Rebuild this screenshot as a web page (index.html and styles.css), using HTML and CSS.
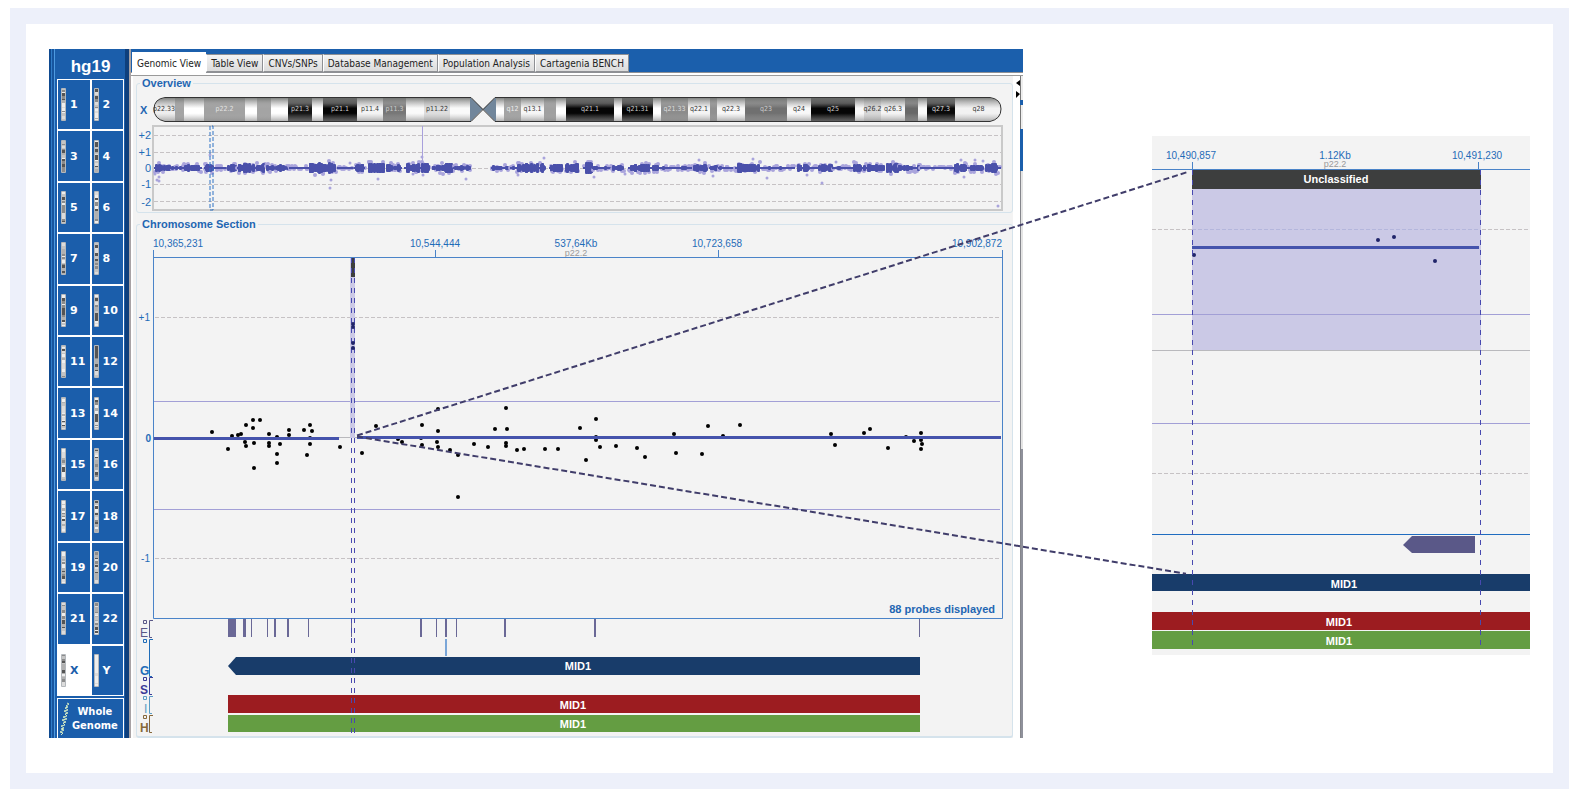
FILE: index.html
```
<!DOCTYPE html>
<html lang="en">
<head>
  <meta charset="UTF-8" />
  <meta name="viewport" content="width=device-width, initial-scale=1.0" />
  <title>Genomic View - chromosome X</title>
  <link rel="stylesheet" href="styles.css">
</head>
<body>
  <div class="figure">
    <div class="app">
      <aside class="sidebar">
        <h1>hg19</h1>
        <div class="chrom-grid" id="chromGrid"></div>
        <button type="button" class="whole-genome">
          <svg width="10" height="34" viewBox="0 0 10 34">
            <path d="M7 1l2 1-3 2 2 1-3 1 3 2-4 1 4 2-3 1 2 2-4 1 4 2-5 1 4 2-3 1 2 2-4 1 3 2-3 1 3 1-4 2 3 1-2 2" />
          </svg>
          <span>Whole<br>Genome</span>
        </button>
      </aside>

      <nav class="tabs">
        <button type="button" class="tab active">Genomic View</button>
        <button type="button" class="tab">Table View</button>
        <button type="button" class="tab">CNVs/SNPs</button>
        <button type="button" class="tab">Database Management</button>
        <button type="button" class="tab">Population Analysis</button>
        <button type="button" class="tab">Cartagenia BENCH</button>
      </nav>

      <main class="content">
        <fieldset>
          <legend>Overview</legend>
          <svg class="chart" viewBox="137 89 875 123">
            <defs>
              <linearGradient id="tube" x1="0" y1="0" x2="0" y2="1">
                <stop offset="0" stop-color="#6a6d6a" stop-opacity="0.95" />
                <stop offset="0.25" stop-color="#a0a0a0" stop-opacity="0.55" />
                <stop offset="0.45" stop-color="#b0b0b0" stop-opacity="0" />
                <stop offset="0.65" stop-color="#b0b0b0" stop-opacity="0" />
                <stop offset="1" stop-color="#888888" stop-opacity="0.75" />
              </linearGradient>
              <clipPath id="arms">
                <path d="M165 98H471L483 109L471 121H165Q154 119 154 109T165 98ZM495 98H990Q1001 99 1001 109T990 121H495L483 109Z" />
              </clipPath>
            </defs>
            <text class="label-bold" x="140" y="114">X</text>
            <g clip-path="url(#arms)">
              <g id="bands"></g>
              <rect x="153" y="97" width="850" height="25" fill="url(#tube)" />
              <path class="centromere" d="M470 97L483 109L470 122ZM496 97L483 109L496 122Z" />
            </g>
            <path class="outline" d="M165 97.500H471L495 121.500H990Q1001 119 1001 109T990 97.500H495L471 121.500H165Q154 119 154 109T165 97.500Z" />
            <g id="bandLabels"></g>

            <rect class="overview-box" x="153" y="126" width="849" height="84" />
            <path class="dashed" d="M154 135.500H1001M154 152.500H1001M154 168.500H1001M154 184.500H1001M154 201.500H1001" />
            <g class="axis">
              <text x="151" y="139" text-anchor="end">+2</text>
              <text x="151" y="156" text-anchor="end">+1</text>
              <text x="151" y="172" text-anchor="end">0</text>
              <text x="151" y="188" text-anchor="end">-1</text>
              <text x="151" y="206" text-anchor="end">-2</text>
            </g>
            <path class="spike" d="M422.500 126V166" />
            <g id="overviewPoints"></g>
            <path class="selection" d="M210 126V210H213V126Z" />
          </svg>
        </fieldset>

        <fieldset>
          <legend>Chromosome Section</legend>
          <svg class="chart" viewBox="137 230 875 506">
            <g class="ruler">
              <text x="153" y="247">10,365,231</text>
              <text x="435" y="247" text-anchor="middle">10,544,444</text>
              <text x="576" y="247" text-anchor="middle">537,64Kb</text>
              <text x="717" y="247" text-anchor="middle">10,723,658</text>
              <text x="1002" y="247" text-anchor="end">10,902,872</text>
            </g>
            <text class="band-name" x="576" y="256" text-anchor="middle">p22.2</text>
            <path class="frame" d="M153.500 250V618.500H1002.500V250M153.500 257.500H1002.500M435.500 250V257M718.500 250V257" />
            <path class="dashed" d="M155 317.500H1001M155 558.500H1001" />
            <path class="limit" d="M154 401.500H1000M154 509.500H1000" />
            <path class="base" d="M154 437.500H1001" />
            <rect class="call" x="350" y="258" width="5" height="180" />
            <g class="axis small">
              <text x="150" y="321" text-anchor="end">+1</text>
              <text class="zero" x="151" y="442" text-anchor="end">0</text>
              <text x="150" y="562" text-anchor="end">-1</text>
            </g>
            <g id="sectionPoints"></g>
            <path class="segment" d="M154 438.500H339M357 437.500H1001" />
            <rect class="call-head" x="351" y="258" width="4" height="19" />
            <text class="label-bold" x="995" y="613" text-anchor="end">88 probes displayed</text>

            <g id="exons"></g>
            <rect class="light-exon" x="445" y="639" width="2" height="17" />
            <path class="gene-navy" d="M236 657H920V675H236L228 666Z" />
            <rect class="gene-red" x="228" y="695" width="692" height="18" />
            <rect class="gene-green" x="228" y="715" width="692" height="17" />
            <text class="gene" x="578" y="670">MID1</text>
            <text class="gene" x="573" y="709">MID1</text>
            <text class="gene" x="573" y="728">MID1</text>
            <path class="marker" d="M351.500 258V733M354.500 258V733" />
            <g id="callPoints"></g>

            <g class="track track-e">
              <path d="M153 620.500H149.500V637.500H152M143.500 620.500h3v3h-3z" />
              <text x="140" y="637">E</text>
            </g>
            <g class="track track-g">
              <path d="M153 639.500H149.500V676.500H152M143.500 639.500h3v3h-3z" />
              <text x="140" y="675">G</text>
            </g>
            <g class="track track-s">
              <path d="M153 677.500H149.500V694.500H152M143.500 677.500h3v3h-3z" />
              <text x="140" y="694">S</text>
            </g>
            <g class="track track-i">
              <path d="M153 696.500H149.500V713.500H152M143.500 696.500h3v3h-3z" />
              <text x="144" y="713">I</text>
            </g>
            <g class="track track-h">
              <path d="M153 715.500H149.500V732.500H152M143.500 715.500h3v3h-3z" />
              <text x="140" y="732">H</text>
            </g>
          </svg>
        </fieldset>
      </main>

      <div class="splitter">
        <svg width="4" height="20" viewBox="0 0 4 20">
          <path d="M4 1V7L0 4ZM0 12V19L4 15Z" />
        </svg>
        <div class="dock">
          <span class="dock-button"></span>
          <span class="dock-button"></span>
        </div>
        <div class="scroll-track"></div>
      </div>
    </div>

    <div class="detail">
      <svg class="chart" viewBox="1152 136 378 519">
        <g class="ruler">
          <text x="1191" y="159" text-anchor="middle">10,490,857</text>
          <text x="1335" y="159" text-anchor="middle">1.12Kb</text>
          <text x="1477" y="159" text-anchor="middle">10,491,230</text>
        </g>
        <text class="band-name" x="1335" y="167" text-anchor="middle">p22.2</text>
        <path class="dashed" d="M1152 229.500H1530M1152 473.500H1530" />
        <rect class="call" x="1192" y="189" width="289" height="162" />
        <path class="dashed faint" d="M1192 229.500H1480" />
        <path class="limit" d="M1152 314.500H1530M1152 423.500H1530" />
        <path class="base" d="M1152 350.500H1530" />
        <path class="frame" d="M1152 169.500H1530M1192.500 162V170M1478.500 162V170" />
        <rect class="call-head" x="1192" y="170" width="289" height="19" />
        <text class="gene" x="1336" y="183">Unclassified</text>
        <path class="segment" d="M1192 247.500H1479" />
        <g id="detailPoints"></g>
        <path class="track-line" d="M1152 534.500H1530" />
        <path class="exon" d="M1412 536H1475V553H1412L1403 545Z" />
        <rect class="gene-navy" x="1152" y="574" width="378" height="17" />
        <rect class="gene-red" x="1152" y="612" width="378" height="18" />
        <rect class="gene-green" x="1152" y="631" width="378" height="18" />
        <text class="gene" x="1344" y="588">MID1</text>
        <text class="gene" x="1339" y="626">MID1</text>
        <text class="gene" x="1339" y="645">MID1</text>
        <path class="marker" d="M1192.500 170V650M1480.500 170V650" />
      </svg>
    </div>

    <!-- zoom lines from the call to the detail panel -->
    <svg class="connectors" viewBox="26 24 1527 748" preserveAspectRatio="none">
      <path d="M357 435L1187 172M357 436L1186 573" />
    </svg>
  </div>

  <script src="app.js"></script>
</body>
</html>
```
FILE: styles.css
```
* {
  box-sizing: border-box;
}

body {
  margin: 8px 10px;
  background-color: #fff;
  font-family: "Liberation Sans", Arial, sans-serif;
}

.figure {
  position: relative;
  display: grid;
  grid-template-columns: 974fr 378fr;
  column-gap: 129px;
  align-items: start;
  padding: 25px 23px 35px;
  border: 16px solid #edf0fa;
}

.app {
  display: grid;
  grid-template-columns: 82px 1fr 10px;
  grid-template-rows: 27px auto;
  background-color: #f3f3f3;
}

button {
  margin: 0;
  padding: 0;
  border: none;
  font-family: inherit;
  cursor: pointer;
}

/* Sidebar */
.sidebar {
  grid-row: 1 / 3;
  display: flex;
  flex-direction: column;
  padding: 6px 7px 0 8px;
  background: linear-gradient(to right, #0f4a90 0 2px, #2f7cc8 2px 3px, #17559f 3px 5px, #4d9ae0 5px 6px, #1b5eab 6px 76px, #0e3f7c 76px 80px, #a8a2a4 80px 82px);
}

h1 {
  margin: 0;
  height: 24px;
  color: #fff;
  font-size: 17px;
  line-height: 24px;
  text-align: center;
}

.chrom-grid {
  flex: 1;
  display: grid;
  grid-template-columns: 1fr 1fr;
  gap: 2px;
  padding: 1px;
  background-color: #fff;
}

.chrom {
  display: flex;
  align-items: center;
  gap: 4px;
  padding-left: 3px;
  background-color: #1b5eab;
  color: #fff;
  font-family: "DejaVu Sans", Verdana, sans-serif;
  font-size: 11px;
  font-weight: bold;
}

.chrom:nth-child(even) {
  padding-left: 2px;
}

.chrom.selected {
  background-color: #fff;
  color: #1b5eab;
}

.whole-genome {
  display: flex;
  align-items: center;
  gap: 2px;
  height: 40px;
  margin-top: 2px;
  padding-left: 2px;
  border: 1px solid #fff;
  border-bottom: none;
  background-color: #1b5eab;
  color: #fff;
  font-family: "DejaVu Sans Condensed", "DejaVu Sans", sans-serif;
  font-size: 11px;
  font-weight: bold;
  line-height: 14px;
}

.whole-genome path {
  fill: none;
  stroke: #d4ecc4;
}

/* Tabs */
.tabs {
  grid-column: 2 / 4;
  display: flex;
  align-items: flex-end;
  padding: 0 0 4px 1px;
  background: linear-gradient(#1b5fac 0 23px, #8e9094 23px 24px, #fff 24px 26px, #9a9a9a 26px);
}

.tab {
  height: 18px;
  padding: 0 4px;
  border: 1px solid #8e9094;
  border-left-color: #fff;
  background: linear-gradient(#f4f4f4, #dcdcdc);
  color: #222;
  font-family: "DejaVu Sans Condensed", "DejaVu Sans", sans-serif;
  font-size: 10px;
  white-space: nowrap;
}

.tab.active {
  height: 22px;
  margin-bottom: -2px;
  padding: 0 5px;
  border: none;
  background: #fff;
}

/* Charts */
.content {
  padding: 1px 0 0 3px;
  border-left: 2px solid #fff;
}

fieldset {
  margin: 0 0 5px;
  padding: 0;
  min-width: 0;
  border: 1px solid #d5e3ec;
  border-radius: 3px;
}

fieldset:last-child {
  margin: 0;
  border-bottom-width: 2px;
}

legend {
  margin-left: 3px;
  padding: 0 2px;
  color: #1f66b2;
  font-size: 11px;
  font-weight: bold;
  line-height: 12px;
}

.chart {
  display: block;
  width: 100%;
  height: auto;
}

.chart path {
  fill: none;
}

.chart .centromere {
  fill: #71869b;
}

.outline {
  stroke: #333;
}

.band-label {
  font-family: "DejaVu Sans Condensed", "DejaVu Sans", sans-serif;
  font-size: 7px;
  text-anchor: middle;
}

.overview-box {
  fill: none;
  stroke: #c9c9c9;
  stroke-width: 2;
}

.dashed {
  stroke: #c6c2c4;
  stroke-dasharray: 4 2;
}

.faint {
  stroke: #b4b6dc;
}

.axis,
.ruler {
  fill: #1f6cb8;
  font-size: 11px;
}

.ruler,
.axis.small {
  font-size: 10px;
}

.zero {
  font-weight: bold;
}

.label-bold {
  fill: #1f66b2;
  font-size: 11px;
  font-weight: bold;
}

.band-name {
  fill: #9a9a9a;
  font-size: 9px;
}

.spike {
  stroke: #a8a0dc;
}

.selection {
  stroke: #2e72c4;
  stroke-dasharray: 4 2;
}

.frame {
  stroke: #4a83c8;
}

.limit {
  stroke: #a29fd6;
}

.base {
  stroke: #b9b9bd;
}

.segment {
  stroke: #4553ac;
  stroke-width: 3;
}

.call {
  fill: #cbc9e6;
}

.call-head {
  fill: #3d3e3e;
}

.marker {
  stroke: #4749b0;
  stroke-dasharray: 5 5;
}

.call-dot {
  fill: #20246a;
}

.cloud {
  fill: #4a50aa;
}

.outlier {
  fill: #a9a4dc;
}

.chart .exon {
  fill: #5a5888;
}

.light-exon {
  fill: #7aa6d8;
}

.chart .gene-navy {
  fill: #183c6a;
}

.gene-red {
  fill: #9c1c20;
}

.gene-green {
  fill: #649d42;
}

.gene {
  fill: #fff;
  font-size: 11px;
  font-weight: bold;
  text-anchor: middle;
}

.track {
  font-size: 12px;
}

.track-e {
  fill: #5a5888;
  stroke: #5a5888;
}

.track-g {
  fill: #1f6cb8;
  stroke: #1f6cb8;
}

.track-s {
  fill: #3a3a98;
  stroke: #3a3a98;
}

.track-i {
  fill: #5a9cc4;
  stroke: #5a9cc4;
}

.track-h {
  fill: #86683a;
  stroke: #86683a;
}

.track text {
  stroke: none;
  font-weight: bold;
}

.track-e text,
.track-i text {
  font-weight: normal;
}

.track-line {
  stroke: #1f6cc0;
}

/* Splitter and right dock */
.splitter {
  display: grid;
  grid-template-columns: 7px 3px;
  grid-template-rows: 95px 1fr;
  background-color: #fff;
}

.splitter > svg {
  margin: 3px 0 0 3px;
}

.dock {
  display: flex;
  flex-direction: column;
  gap: 5px;
  background-color: #1b5fac;
}

.dock-button {
  height: 24px;
  border-left: 1px solid #777;
  background-color: #eee;
}

.scroll-track {
  grid-column: 2;
  border-left: 1px solid #85868c;
  background: linear-gradient(#e4e4e4 0 49%, #8f919b 49%);
}

/* Detail panel */
.detail {
  margin-top: 87px;
  background-color: #f3f3f3;
}

.connectors {
  position: absolute;
  top: 0;
  left: 0;
  width: 100%;
  height: 100%;
  pointer-events: none;
}

.connectors path {
  fill: none;
  stroke: #403d6a;
  stroke-width: 2;
  stroke-dasharray: 6 3;
}
```
FILE: app.js
```
const SVG_NS = 'http://www.w3.org/2000/svg';

// small seeded generator so the plots look the same on every load
let seed = 19;
function rand() {
  seed = (seed * 16807) % 2147483647;
  return seed / 2147483647;
}

function add(parent, name, attrs, text) {
  const el = document.createElementNS(SVG_NS, name);
  for (const key in attrs) {
    el.setAttribute(key, attrs[key]);
  }
  if (text) el.textContent = text;
  parent.appendChild(el);
  return el;
}

// Chromosome buttons
const chromGrid = document.getElementById('chromGrid');
const names = [];
for (let i = 1; i <= 22; i++) names.push(String(i));
names.push('X', 'Y');
const shades = ['#eeeeee', '#dcdcdc', '#c4c4c4', '#b0b0b0', '#8c8c8c', '#555555'];

names.forEach((name) => {
  const button = document.createElement('button');
  button.type = 'button';
  button.className = name === 'X' ? 'chrom selected' : 'chrom';
  const icon = add(button, 'svg', { width: 5, height: 33, viewBox: '0 0 5 33' });
  add(icon, 'rect', { x: 0, y: 0, width: 5, height: 33, rx: 1, fill: '#b4b8bc' });
  let y = 1;
  while (y < 32) {
    const h = Math.min(1 + Math.floor(rand() * 3), 32 - y);
    const limit = name === 'Y' ? 2 : shades.length;
    const shade = shades[Math.floor(rand() * limit)];
    add(icon, 'rect', { x: 1, y: y, width: 3, height: h, fill: shade });
    y += h;
  }
  const label = document.createElement('span');
  label.textContent = name;
  button.appendChild(label);
  chromGrid.appendChild(button);
});

// Ideogram bands: start, end, fill, label, label color
const bands = [
  [153, 175, '#eeeeee', 'p22.33', '#333'], [175, 184, '#a4a4a4'], [184, 204, '#ffffff'],
  [204, 245, '#a2a2a2', 'p22.2', '#e4e4e4'], [245, 257, '#ffffff'], [257, 271, '#a4a4a4'],
  [271, 288, '#ffffff'], [288, 312, '#151515', 'p21.3', '#ccc'], [312, 323, '#ffffff'],
  [323, 357, '#050505', 'p21.1', '#ccc'], [357, 383, '#f4f4f4', 'p11.4', '#333'],
  [383, 406, '#777777', 'p11.3', '#ccc'], [406, 424, '#fafafa'],
  [424, 450, '#dedede', 'p11.22', '#333'], [450, 470, '#fafafa'],
  [496, 504, '#ffffff'], [504, 521, '#a4a4a4', 'q12', '#eee'],
  [521, 544, '#f6f6f6', 'q13.1', '#333'], [544, 556, '#a0a0a0'], [556, 566, '#ffffff'],
  [566, 614, '#050505', 'q21.1', '#ccc'], [614, 622, '#ffffff'],
  [622, 653, '#050505', 'q21.31', '#ccc'], [653, 661, '#ffffff'],
  [661, 688, '#8c8c8c', 'q21.33', '#ddd'], [688, 710, '#f4f4f4', 'q22.1', '#333'],
  [710, 717, '#909090'], [717, 745, '#f8f8f8', 'q22.3', '#333'],
  [745, 787, '#707070', 'q23', '#ccc'], [787, 811, '#f8f8f8', 'q24', '#333'],
  [811, 855, '#050505', 'q25', '#ccc'], [855, 864, '#f8f8f8'],
  [864, 881, '#d8d8d8', 'q26.2', '#333'], [881, 905, '#f4f4f4', 'q26.3', '#333'],
  [905, 918, '#686868'], [918, 927, '#fafafa'], [927, 955, '#0a0a0a', 'q27.3', '#ddd'],
  [955, 1002, '#f2f2f2', 'q28', '#333']
];
const bandGroup = document.getElementById('bands');
const bandLabels = document.getElementById('bandLabels');
bands.forEach(([x1, x2, fill, label, color]) => {
  add(bandGroup, 'rect', { x: x1, y: 97, width: x2 - x1, height: 25, fill: fill });
  if (label) {
    add(bandLabels, 'text', { x: (x1 + x2) / 2, y: 111, fill: color, class: 'band-label' }, label);
  }
});

// Overview clusters: start, end, half height
const clusters = [
  [154, 170, 5], [170, 183, 2], [183, 202, 4], [204, 215, 5], [215, 226, 2], [227, 236, 4],
  [237, 243, 5], [243, 265, 6], [266, 288, 4], [289, 308, 2], [308, 336, 7], [337, 353, 1],
  [354, 365, 5], [368, 384, 6], [386, 402, 5], [404, 430, 6], [432, 440, 3], [440, 453, 6],
  [453, 471, 3], [491, 508, 3], [510, 516, 2], [516, 546, 6], [549, 563, 5], [565, 578, 6],
  [583, 592, 7], [592, 612, 2], [612, 624, 3], [628, 658, 5], [658, 692, 2], [693, 708, 5],
  [709, 718, 4], [718, 735, 2], [735, 760, 6], [760, 795, 2], [797, 810, 5], [810, 818, 2],
  [818, 832, 5], [832, 852, 2], [852, 862, 6], [862, 885, 4], [886, 898, 6], [898, 920, 4],
  [920, 953, 1], [953, 968, 6], [968, 984, 4], [985, 1001, 6]
];
const outliers = [
  [157, 180], [159, 177], [159, 181], [155, 174], [210, 155], [331, 180], [330, 188], [378, 179],
  [422, 157], [466, 179], [544, 158], [594, 177], [625, 174], [413, 174], [518, 175],
  [753, 159], [767, 178], [822, 183], [713, 176], [964, 177], [998, 206], [961, 160],
  [975, 160], [983, 161], [699, 160], [807, 175], [836, 162], [350, 163], [423, 175]
];
const overview = document.getElementById('overviewPoints');
clusters.forEach(([x1, x2, h]) => {
  const width = x2 - x1;
  // faint fringe behind
  for (let i = 0; i < width * 0.6; i++) {
    const x = Math.round(x1 + rand() * width);
    const y = Math.round(168 + (rand() - 0.5) * (2 * h + 1));
    add(overview, 'circle', { cx: x, cy: y, r: 2, class: 'outlier' });
  }
  // solid columns in front
  for (let i = 0; i < width * (h < 3 ? 0.3 : 0.8); i++) {
    const x = Math.round(x1 + 1 + rand() * (width - 2));
    const spread = Math.max(1, Math.round(h * (0.4 + rand() * 0.5)));
    add(overview, 'rect', {
      x: x - 1, y: 168 - spread, width: 3, height: spread * 2, rx: 1, class: 'cloud'
    });
  }
  add(overview, 'rect', { x: x1, y: 167, width: width, height: 2, class: 'cloud' });
});
outliers.forEach(([x, y]) => add(overview, 'circle', { cx: x, cy: y, r: 1.5, class: 'outlier' }));

// Probes
const probes = [
  [212, 432], [228, 449], [232, 436], [238, 435], [241, 434], [246, 425], [253, 420], [260, 420],
  [253, 428], [245, 442], [246, 446], [254, 443], [254, 468], [269, 434], [269, 443], [269, 446],
  [277, 437], [280, 444], [277, 454], [277, 463], [289, 430], [289, 435], [304, 430], [310, 425],
  [312, 431], [310, 438], [310, 444], [307, 455], [340, 447], [362, 453], [376, 426],
  [398, 439], [402, 442], [422, 425], [421, 438], [422, 445], [438, 409], [438, 431], [437, 442],
  [438, 447], [450, 450], [458, 455], [458, 497], [474, 444], [488, 447], [495, 429], [506, 408],
  [507, 429], [506, 443], [506, 446], [517, 450], [524, 449], [545, 449], [558, 449], [580, 428],
  [586, 460], [596, 419], [596, 437], [596, 440], [600, 447], [616, 446], [637, 448], [645, 457],
  [674, 434], [676, 453], [708, 426], [723, 436], [740, 425], [702, 454], [831, 434], [835, 445],
  [864, 433], [870, 429], [888, 448], [906, 437], [914, 441], [921, 433], [921, 440], [922, 444],
  [921, 449]
];
function plot(id, points, className) {
  const group = document.getElementById(id);
  points.forEach(([x, y]) => add(group, 'circle', { cx: x, cy: y, r: 2, class: className }));
}
plot('sectionPoints', probes, 'probe');
plot('callPoints', [[353, 324], [353, 327], [353, 343], [353, 348]], 'call-dot');
plot('detailPoints', [[1194, 255], [1378, 240], [1394, 237], [1435, 261]], 'call-dot');

// Exons: x, width
const exons = [
  [228, 8], [243, 3], [251, 1], [267, 1], [274, 2], [287, 2], [308, 1], [351, 1],
  [420, 2], [436, 1], [445, 2], [456, 1], [504, 2], [594, 2], [919, 1]
];
const exonGroup = document.getElementById('exons');
exons.forEach(([x, w]) => add(exonGroup, 'rect', { x: x, y: 619, width: w, height: 18, fill: '#6a6896' }));
```
